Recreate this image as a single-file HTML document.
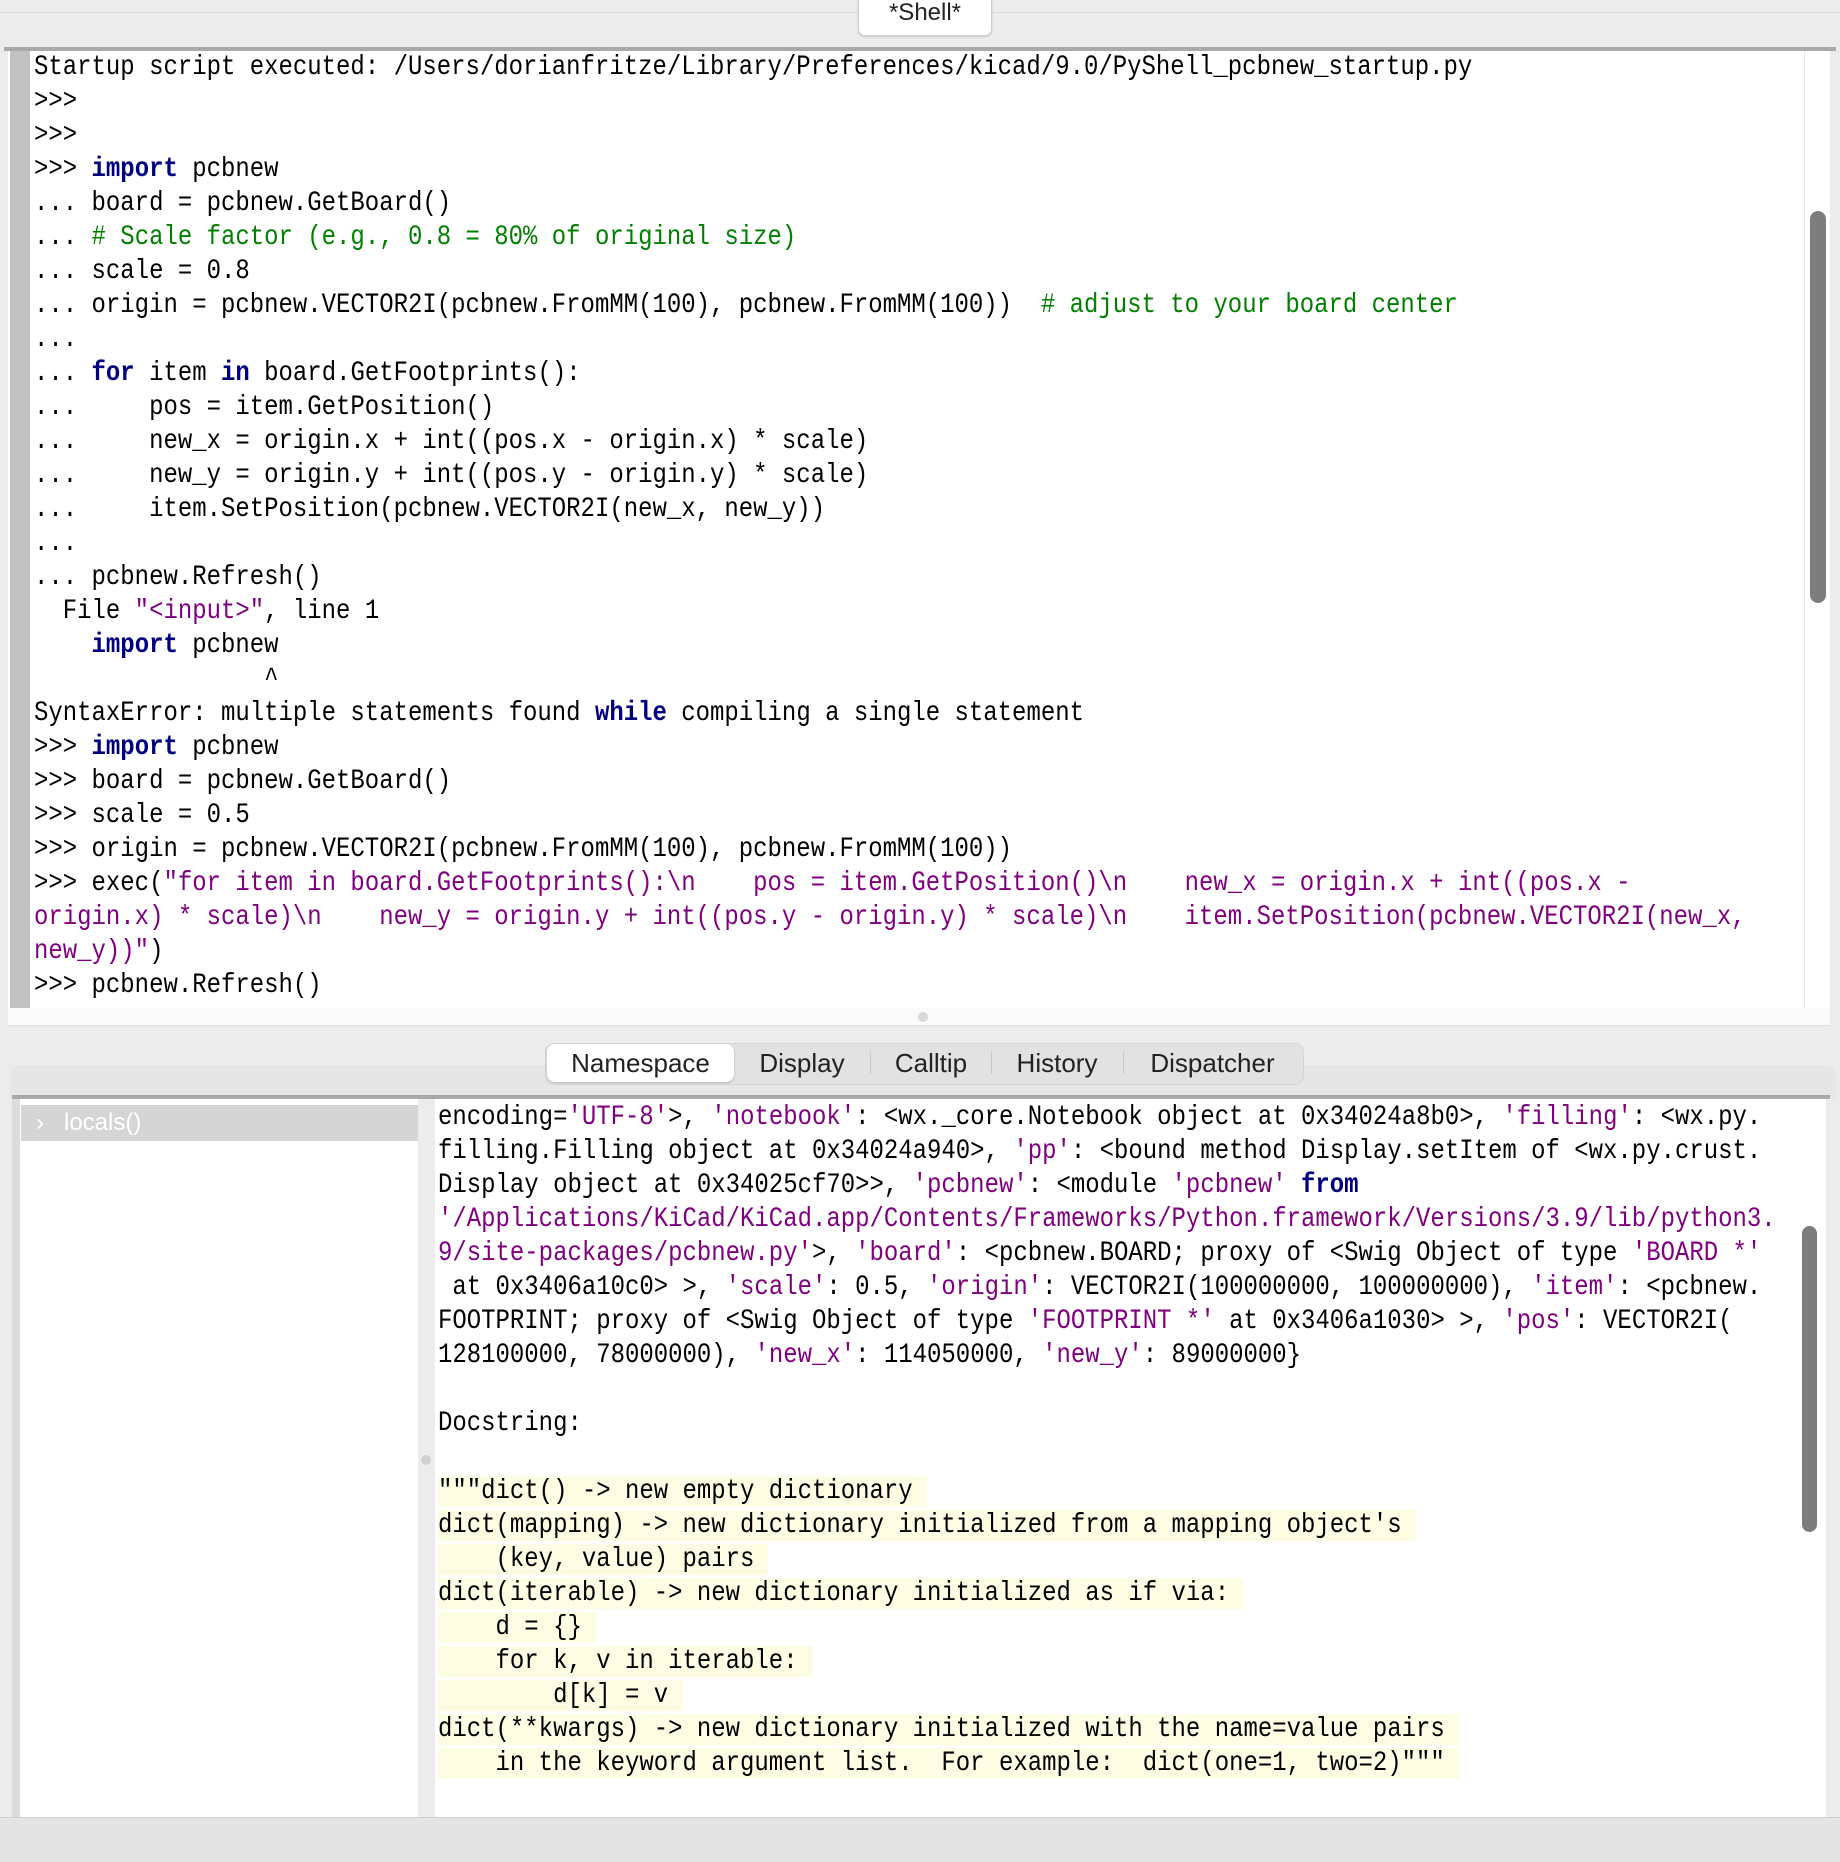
<!DOCTYPE html>
<html><head><meta charset="utf-8"><style>
html,body{margin:0;padding:0;width:1840px;height:1862px;overflow:hidden;background:#ececec;position:relative;font-family:"Liberation Sans",sans-serif}
.abs{position:absolute}
.code{position:absolute;font-family:"Liberation Mono",monospace;font-size:28px;line-height:34px;white-space:pre;color:#000;transform:scaleX(0.856);transform-origin:0 0}
.k{color:#00007f;font-weight:bold}
.c{color:#007f00}
.s{color:#7f007f}
.hl{background:#fdfde4}
.tab{position:absolute;top:1043px;height:40px;line-height:40px;font-size:26px;color:#222;text-align:center}
.sep{position:absolute;top:1052px;width:1px;height:22px;background:#c8c8c8}
</style></head><body>
<!-- top -->
<div class="abs" style="left:0;top:0;width:1840px;height:47px;background:#ececec"></div>
<div class="abs" style="left:0;top:12px;width:1840px;height:1px;background:#dcdcdc"></div>
<div class="abs" style="left:858px;top:-6px;width:132px;height:40px;background:#fff;border:1px solid #cfcfcf;border-radius:7px;box-shadow:0 1px 2px rgba(0,0,0,.15);font-size:24px;text-align:center;line-height:36px;color:#222">*Shell*</div>
<!-- shell frame -->
<div class="abs" style="left:4px;top:47px;width:1832px;height:4px;background:#a9a9a9"></div>
<div class="abs" style="left:8px;top:51px;width:1822px;height:957px;background:#fff"></div>
<div class="abs" style="left:10px;top:51px;width:20px;height:957px;background:#c2c2c2"></div>
<div class="abs" style="left:1804px;top:51px;width:1px;height:957px;background:#e6e6e6"></div>
<div class="abs" style="left:1810px;top:211px;width:16px;height:392px;background:#7d7d7d;border-radius:8px"></div>
<div class="abs" style="left:8px;top:1008px;width:1822px;height:17px;background:#fafafa;border-bottom:1px solid #e0e0e0"></div>
<div class="abs" style="left:918px;top:1012px;width:10px;height:10px;background:#d8d8d8;border-radius:5px"></div>
<div class="code" style="left:34px;top:51px">Startup script executed: /Users/dorianfritze/Library/Preferences/kicad/9.0/PyShell_pcbnew_startup.py
&gt;&gt;&gt;
&gt;&gt;&gt;
&gt;&gt;&gt; <span class="k">import</span> pcbnew
... board = pcbnew.GetBoard()
... <span class="c"># Scale factor (e.g., 0.8 = 80% of original size)</span>
... scale = 0.8
... origin = pcbnew.VECTOR2I(pcbnew.FromMM(100), pcbnew.FromMM(100))  <span class="c"># adjust to your board center</span>
...
... <span class="k">for</span> item <span class="k">in</span> board.GetFootprints():
...     pos = item.GetPosition()
...     new_x = origin.x + int((pos.x - origin.x) * scale)
...     new_y = origin.y + int((pos.y - origin.y) * scale)
...     item.SetPosition(pcbnew.VECTOR2I(new_x, new_y))
...
... pcbnew.Refresh()
  File <span class="s">"&lt;input&gt;"</span>, line 1
    <span class="k">import</span> pcbnew
                ^
SyntaxError: multiple statements found <span class="k">while</span> compiling a single statement
&gt;&gt;&gt; <span class="k">import</span> pcbnew
&gt;&gt;&gt; board = pcbnew.GetBoard()
&gt;&gt;&gt; scale = 0.5
&gt;&gt;&gt; origin = pcbnew.VECTOR2I(pcbnew.FromMM(100), pcbnew.FromMM(100))
&gt;&gt;&gt; exec(<span class="s">"for item in board.GetFootprints():\n    pos = item.GetPosition()\n    new_x = origin.x + int((pos.x -</span>
<span class="s">origin.x) * scale)\n    new_y = origin.y + int((pos.y - origin.y) * scale)\n    item.SetPosition(pcbnew.VECTOR2I(new_x,</span>
<span class="s">new_y))"</span>)
&gt;&gt;&gt; pcbnew.Refresh()</div>
<!-- lower panel header -->
<div class="abs" style="left:10px;top:1065px;width:1826px;height:35px;background:#e6e6e6;border-radius:10px 10px 0 0"></div>
<!-- tabs -->
<div class="abs" style="left:545px;top:1043px;width:757px;height:40px;background:#e2e2e2;border-radius:9px;border:1px solid #d6d6d6"></div>
<div class="abs" style="left:547px;top:1044px;width:187px;height:38px;background:#fff;border-radius:8px;box-shadow:0 1px 2px rgba(0,0,0,.2)"></div>
<div class="tab" style="left:547px;width:187px">Namespace</div>
<div class="tab" style="left:740px;width:124px">Display</div>
<div class="sep" style="left:870px"></div>
<div class="tab" style="left:872px;width:118px">Calltip</div>
<div class="sep" style="left:991px"></div>
<div class="tab" style="left:993px;width:128px">History</div>
<div class="sep" style="left:1123px"></div>
<div class="tab" style="left:1125px;width:175px">Dispatcher</div>
<!-- lower panel -->
<div class="abs" style="left:12px;top:1095px;width:1818px;height:4px;background:#a9a9a9"></div>
<div class="abs" style="left:12px;top:1099px;width:1818px;height:718px;background:#fff"></div>
<div class="abs" style="left:12px;top:1099px;width:8px;height:718px;background:#dcdcdc"></div>
<div class="abs" style="left:21px;top:1105px;width:397px;height:36px;background:#d5d5d5"></div>
<div class="abs" style="left:36px;top:1105px;line-height:36px;font-size:24px;color:#fff">›&nbsp;&nbsp;&nbsp;locals()</div>
<div class="abs" style="left:418px;top:1099px;width:17px;height:718px;background:#ececec"></div>
<div class="abs" style="left:421px;top:1455px;width:10px;height:10px;background:#d0d0d0;border-radius:5px"></div>
<div class="abs" style="left:1826px;top:1099px;width:4px;height:718px;background:#ececec"></div>
<div class="abs" style="left:1802px;top:1226px;width:15px;height:306px;background:#7d7d7d;border-radius:8px"></div>
<div class="code" style="left:438px;top:1101px">encoding=<span class="s">'UTF-8'</span>&gt;, <span class="s">'notebook'</span>: &lt;wx._core.Notebook object at 0x34024a8b0&gt;, <span class="s">'filling'</span>: &lt;wx.py.
filling.Filling object at 0x34024a940&gt;, <span class="s">'pp'</span>: &lt;bound method Display.setItem of &lt;wx.py.crust.
Display object at 0x34025cf70&gt;&gt;, <span class="s">'pcbnew'</span>: &lt;module <span class="s">'pcbnew'</span> <span class="k">from</span>
<span class="s">'/Applications/KiCad/KiCad.app/Contents/Frameworks/Python.framework/Versions/3.9/lib/python3.</span>
<span class="s">9/site-packages/pcbnew.py'</span>&gt;, <span class="s">'board'</span>: &lt;pcbnew.BOARD; proxy of &lt;Swig Object of type <span class="s">'BOARD *'</span>
 at 0x3406a10c0&gt; &gt;, <span class="s">'scale'</span>: 0.5, <span class="s">'origin'</span>: VECTOR2I(100000000, 100000000), <span class="s">'item'</span>: &lt;pcbnew.
FOOTPRINT; proxy of &lt;Swig Object of type <span class="s">'FOOTPRINT *'</span> at 0x3406a1030&gt; &gt;, <span class="s">'pos'</span>: VECTOR2I(
128100000, 78000000), <span class="s">'new_x'</span>: 114050000, <span class="s">'new_y'</span>: 89000000}

Docstring:

<span class="hl">"""dict() -&gt; new empty dictionary </span>
<span class="hl">dict(mapping) -&gt; new dictionary initialized from a mapping object's </span>
<span class="hl">    (key, value) pairs </span>
<span class="hl">dict(iterable) -&gt; new dictionary initialized as if via: </span>
<span class="hl">    d = {} </span>
<span class="hl">    for k, v in iterable: </span>
<span class="hl">        d[k] = v </span>
<span class="hl">dict(**kwargs) -&gt; new dictionary initialized with the name=value pairs </span>
<span class="hl">    in the keyword argument list.  For example:  dict(one=1, two=2)""" </span></div>
<!-- bottom -->
<div class="abs" style="left:0;top:1817px;width:1840px;height:45px;background:#e4e4e4;border-top:1px solid #d0d0d0"></div>
</body></html>
